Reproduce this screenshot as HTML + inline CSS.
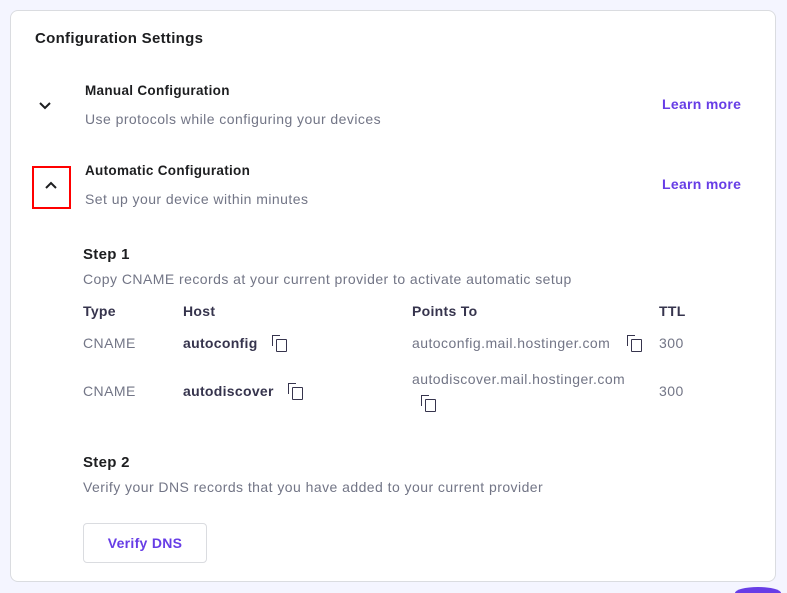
<!DOCTYPE html>
<html style="overflow:hidden"><head><style>
html,body{margin:0;width:787px;height:593px;overflow:hidden}
body{background:#f4f5ff;font-family:"Liberation Sans",sans-serif;position:relative}
.card{position:absolute;left:10px;top:10px;width:764px;height:570px;background:#fff;border:1px solid #dadce0;border-radius:8px}
.a{position:absolute;white-space:nowrap}
.t{color:#1d1e20;font-weight:bold;font-size:14px;letter-spacing:0.3px}
.g{color:#727586;font-size:14px;letter-spacing:0.45px}
.l{color:#673de6;font-weight:bold;font-size:14px;letter-spacing:0.3px}
.c{position:absolute;width:9px;height:11px;border:1.5px solid #36344d;border-radius:1px}
.c:before{content:"";position:absolute;left:-5px;top:-5px;width:7px;height:10px;border-left:1.5px solid #36344d;border-top:1.5px solid #36344d}
</style></head><body>
<div class="card"></div>
<div class="a t" style="left:35px;top:30px;font-size:15px">Configuration Settings</div>
<svg class="a" style="left:37px;top:100px" width="16" height="12"><path d="M3 3l5 5 5-5" stroke="#1d1e20" stroke-width="2" fill="none"/></svg>
<div class="a t" style="left:85px;top:83px;font-size:13.5px">Manual Configuration</div>
<div class="a g" style="left:85px;top:111px">Use protocols while configuring your devices</div>
<div class="a l" style="left:662px;top:96px">Learn more</div>
<div class="a" style="left:32px;top:166px;width:35px;height:39px;border:2px solid #f00"></div>
<svg class="a" style="left:43px;top:180px" width="16" height="12"><path d="M3 8l5-5 5 5" stroke="#1d1e20" stroke-width="2" fill="none"/></svg>
<div class="a t" style="left:85px;top:163px;font-size:13.5px">Automatic Configuration</div>
<div class="a g" style="left:85px;top:191px">Set up your device within minutes</div>
<div class="a l" style="left:662px;top:176px">Learn more</div>
<div class="a t" style="left:83px;top:246px;font-size:15px">Step 1</div>
<div class="a g" style="left:83px;top:271px">Copy CNAME records at your current provider to activate automatic setup</div>
<div class="a t" style="left:83px;top:303px;color:#36344d">Type</div>
<div class="a t" style="left:183px;top:303px;color:#36344d">Host</div>
<div class="a t" style="left:412px;top:303px;color:#36344d">Points To</div>
<div class="a t" style="left:659px;top:303px;color:#36344d">TTL</div>
<div class="a g" style="left:83px;top:335px">CNAME</div>
<div class="a t" style="left:183px;top:335px;color:#36344d">autoconfig</div>
<div class="c" style="left:276px;top:339px"></div>
<div class="a g" style="left:412px;top:335px">autoconfig.mail.hostinger.com</div>
<div class="c" style="left:631px;top:339px"></div>
<div class="a g" style="left:659px;top:335px">300</div>
<div class="a g" style="left:83px;top:383px">CNAME</div>
<div class="a t" style="left:183px;top:383px;color:#36344d">autodiscover</div>
<div class="c" style="left:292px;top:387px"></div>
<div class="a g" style="left:412px;top:371px">autodiscover.mail.hostinger.com</div>
<div class="c" style="left:425px;top:399px"></div>
<div class="a g" style="left:659px;top:383px">300</div>
<div class="a t" style="left:83px;top:454px;font-size:15px">Step 2</div>
<div class="a g" style="left:83px;top:479px">Verify your DNS records that you have added to your current provider</div>
<div class="a" style="left:83px;top:523px;width:124px;height:40px;border:1px solid #dadce0;border-radius:4px;box-sizing:border-box;text-align:center;line-height:38px"><span class="l">Verify DNS</span></div>
<div class="a" style="left:735px;top:587px;width:46px;height:6px;border-radius:23px 23px 0 0/6px 6px 0 0;background:#673de6"></div>
</body></html>
